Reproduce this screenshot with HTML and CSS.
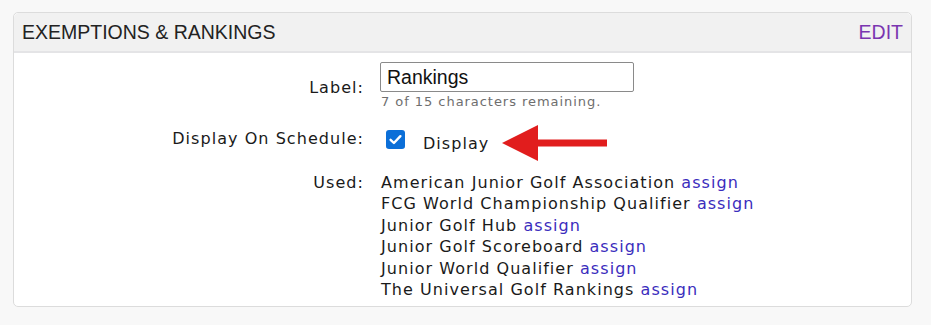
FILE: index.html
```html
<!DOCTYPE html>
<html>
<head>
<meta charset="utf-8">
<link rel="stylesheet" href="styles.css">
</head>
<body>
<div class="panel">
  <div class="panel-head">
    <span class="title">EXEMPTIONS &amp; RANKINGS</span>
    <a class="edit" href="#">EDIT</a>
  </div>
  <div class="panel-body">
    <div class="lbl lbl-label">Label:</div>
    <div class="val">
      <input class="text-input" type="text" value="Rankings">
      <div class="hint">7 of 15 characters remaining.</div>
    </div>
    <div class="lbl lbl-display">Display On Schedule:</div>
    <div class="val display-row">
      <span class="check"><svg width="19" height="19" viewBox="0 0 19 19"><rect x="0" y="0" width="19" height="19" rx="3" fill="#0b6fd8"/><path d="M4.6 9.8 L7.9 13 L14.4 6.2" fill="none" stroke="#fff" stroke-width="2.4" stroke-linecap="round" stroke-linejoin="round"/></svg></span>
      <span class="display-text">Display</span>
      <svg class="arrow" width="106" height="36" viewBox="0 0 106 36"><polygon points="0,18 36,0 36,14.5 105,14.5 105,21.5 36,21.5 36,36" fill="#e11d1d"/></svg>
    </div>
    <div class="lbl lbl-used">Used:</div>
    <div class="val used-list">
      <div>American Junior Golf Association <a href="#">assign</a></div>
      <div>FCG World Championship Qualifier <a href="#">assign</a></div>
      <div>Junior Golf Hub <a href="#">assign</a></div>
      <div>Junior Golf Scoreboard <a href="#">assign</a></div>
      <div>Junior World Qualifier <a href="#">assign</a></div>
      <div>The Universal Golf Rankings <a href="#">assign</a></div>
    </div>
  </div>
</div>
</body>
</html>
```

FILE: styles.css
```css
html, body {
  margin: 0;
  padding: 0;
  background: #f8f8f8;
}
body {
  padding: 12px 19px 0 13px;
  font-family: "DejaVu Sans", Verdana, sans-serif;
  color: #1a1a1a;
}
.panel {
  background: #fff;
  border: 1px solid #dcdcdc;
  border-radius: 5px;
  height: 295px;
  box-sizing: border-box;
}
.panel-head {
  display: flex;
  justify-content: space-between;
  align-items: center;
  height: 38px;
  padding: 0 8px 0 8px;
  background: #f1f1f1;
  border-bottom: 2px solid #e4e4e6;
  border-radius: 5px 5px 0 0;
  font-family: "Liberation Sans", Arial, sans-serif;
  font-size: 19.5px;
}
.title {
  color: #222;
}
.edit {
  color: #7a35b0;
  text-decoration: none;
}
.panel-body {
  display: grid;
  grid-template-columns: 350px 1fr;
  column-gap: 17px;
  padding-top: 9px;
  font-size: 16px;
  letter-spacing: 1.05px;
}
.lbl {
  text-align: right;
}
.lbl-label {
  padding-top: 16px;
}
.text-input {
  display: block;
  width: 254px;
  height: 30px;
  box-sizing: border-box;
  margin: 0 0 0 -1px;
  border: 1px solid #8a8a8a;
  border-radius: 2px;
  padding: 0 6px;
  font-family: "Liberation Sans", Arial, sans-serif;
  font-size: 19.5px;
  color: #111;
}
.hint {
  font-size: 13px;
  letter-spacing: 0.95px;
  color: #6e6e6e;
  margin-top: 2px;
}
.lbl-display {
  padding-top: 20px;
}
.display-row {
  display: flex;
  align-items: center;
  padding-top: 14px;
  height: 37px;
}
.check {
  display: inline-flex;
  margin-left: 5px;
  margin-top: -5px;
}
.display-text {
  margin-left: 18px;
  margin-top: 4px;
}
.arrow {
  margin-left: 13px;
  margin-top: 3px;
}
.lbl-used, .used-list {
  margin-top: 12px;
  line-height: 21.4px;
}
.used-list a {
  color: #3b2dbd;
  text-decoration: none;
}
```
